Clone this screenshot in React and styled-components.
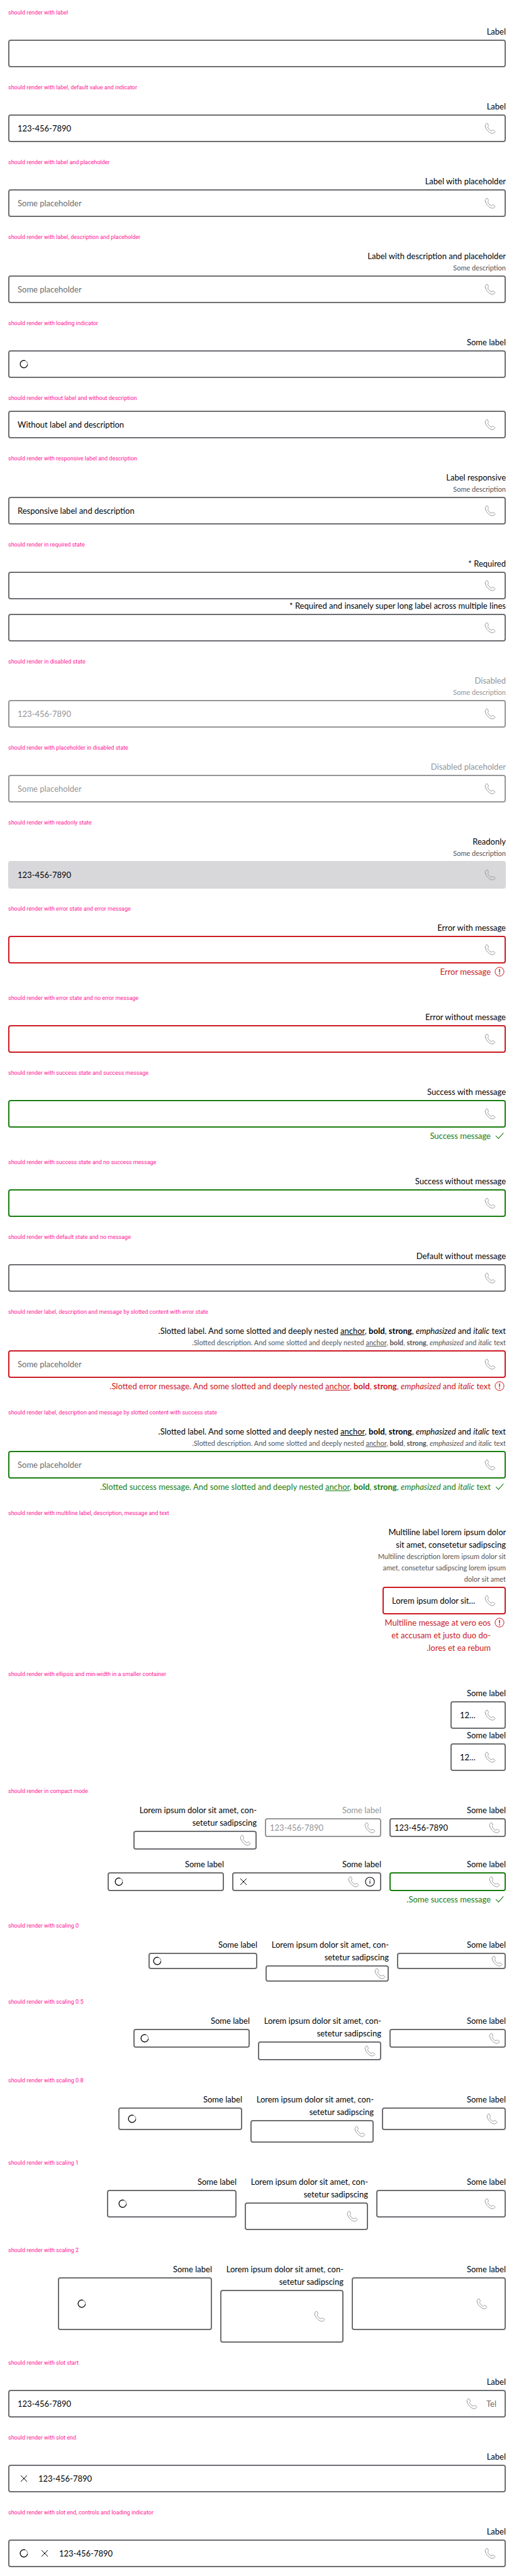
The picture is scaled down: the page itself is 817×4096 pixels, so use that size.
import React, { useId } from 'react';
import styled, { createGlobalStyle, css } from 'styled-components';

const GlobalStyle = createGlobalStyle`
  *, *::before, *::after { box-sizing: border-box; }
  body {
    margin: 0;
    background: #fff;
    color: #010205;
    font: 400 13px/20px Lato, "Liberation Sans", sans-serif;
  }
`;

const tones = {
  default: '#6b6d70',
  disabled: '#949598',
  error: '#cc1922',
  success: '#197e10',
  readonly: '#d8d8db',
};

/* Box padding and gap for each step of the scaling setting */
const scales = {
  0: css`padding: 1px 2px; gap: 2px;`,
  0.5: css`padding: 3px 6px; gap: 6px;`,
  0.8: css`padding: 6px 10px; gap: 10px;`,
  1: css`padding: 10px 13px; gap: 13px;`,
  2: css`padding: 30px 26px; gap: 26px;`,
};

const widths = { min: '88px', multiline: '196px' };

const Page = styled.main`
  display: flex;
  flex-direction: column;
  justify-content: space-between;
  gap: 20px;
  min-height: 100vh;
  padding: 12px 13px 14px;
`;

const Section = styled.section`
  display: flex;
  flex-direction: column;
`;

const Heading = styled.h2`
  margin: 0 0 12px;
  color: #ff1493;
  font: 400 9px/16px Roboto, "Liberation Sans", sans-serif;
`;

const Rows = styled.div`
  display: flex;
  flex-direction: column;
  gap: 13px;
`;

const Row = styled.div`
  display: flex;
  align-items: flex-start;
  gap: 13px;
`;

const FieldRoot = styled.div`
  display: flex;
  flex-direction: column;
  flex: none;
  width: ${(p) => widths[p.$size] || 'auto'};
`;

const Label = styled.label`
  color: ${(p) => (p.$disabled ? tones.disabled : '#010205')};
`;

const Description = styled.span`
  color: ${(p) => (p.$disabled ? tones.disabled : '#535457')};
  font-size: 11px;
  line-height: 18px;
  white-space: nowrap;
`;

const Box = styled.div`
  display: flex;
  align-items: center;
  border: 2px solid ${(p) => tones[p.$tone]};
  border-radius: 4px;
  background: ${(p) => (p.$tone === 'readonly' ? tones.readonly : '#fff')};
  ${(p) => scales[p.$scale]}

  ${Label} + &, ${Description} + & { margin-top: 3px; }
`;

const Input = styled.input`
  flex: 1 1 143px;
  width: 143px;
  min-width: 0;
  height: 20px;
  margin: 0;
  padding: 0;
  border: 0;
  background: transparent;
  color: #010205;
  font: inherit;
  text-align: left;
  text-overflow: ellipsis;
  outline: none;

  &::placeholder { color: ${tones.default}; opacity: 1; }
  &:disabled, &:disabled::placeholder { color: ${tones.disabled}; }
`;

const Icon = styled.svg`
  flex: none;
  width: 20px;
  height: 20px;
  fill: none;
  stroke: currentColor;
  stroke-linejoin: round;
`;

const PhoneMark = styled(Icon)`
  color: ${tones.disabled};
`;

const IconButton = styled.button`
  display: flex;
  flex: none;
  padding: 0;
  border: 0;
  background: none;
  color: #010205;
`;

const SlotText = styled.span`
  color: #6b6d70;
`;

const Message = styled.div`
  display: flex;
  align-items: flex-start;
  gap: 4px;
  margin-top: 3px;
  color: ${(p) => tones[p.$tone]};
`;

const Anchor = styled.a`
  color: inherit;
  text-decoration: underline;
`;

const Phone = () => (
  <PhoneMark viewBox="0 0 24 24" strokeWidth="1.2" aria-hidden="true">
    <path d="M5.9 2.6C4.4 3.1 2.5 4.9 2.6 7.1c.2 3.2 2.5 7.2 5.4 10.1 2.9 2.9 6.2 4.7 8.9 4.5 2-.2 3.7-1.6 4.5-3 .2-.4 0-.8-.3-1-1.1-.9-2.2-1.9-3.6-2.5-.5-.2-.9 0-1.2.4-.5.8-1.2 1.3-2 1.1-2.5-.7-5.7-4-6.6-6.5-.3-.9.2-1.6.9-2.1.4-.3.5-.7.3-1.2C8.4 5.5 7.7 4 6.9 3c-.3-.4-.6-.5-1-.4Z" />
  </PhoneMark>
);

const Loader = () => (
  <Icon viewBox="0 0 24 24" strokeWidth="1.4" role="img" aria-label="Loading">
    <circle cx="12" cy="12" r="7" stroke="#949598" />
    <path d="M18.9 13A7 7 0 1 1 14.4 5.4" />
  </Icon>
);

const Clear = () => (
  <IconButton type="button" aria-label="Clear">
    <Icon viewBox="0 0 24 24" strokeWidth="1.2"><path d="M6 6l12 12M18 6 6 18" /></Icon>
  </IconButton>
);

const Info = () => (
  <IconButton type="button" aria-label="Information">
    <Icon viewBox="0 0 24 24" strokeWidth="1.3">
      <circle cx="12" cy="12" r="8.5" />
      <path d="M12 10.5v5.5M12 7.8v1.4" />
    </Icon>
  </IconButton>
);

const ErrorMark = () => (
  <Icon viewBox="0 0 24 24" strokeWidth="1.2" aria-hidden="true">
    <circle cx="12" cy="12" r="8.5" />
    <path d="M12 7v6.5M12 15v2" strokeWidth="1.8" />
  </Icon>
);

const SuccessMark = () => (
  <Icon viewBox="0 0 24 24" strokeWidth="1.3" aria-hidden="true">
    <path d="M5 12.2l5 5L19.5 6.5" />
  </Icon>
);

function Field({
  label, description, message, tone = 'default', scale = 1, size,
  phone, required, start, end, ...input
}) {
  const id = useId();
  const disabled = tone === 'disabled';
  return (
    <FieldRoot dir="rtl" $size={size}>
      {label && <Label htmlFor={id} $disabled={disabled}>{label}{required && ' *'}</Label>}
      {description && <Description id={`${id}-d`} $disabled={disabled}>{description}</Description>}
      <Box $tone={tone} $scale={scale}>
        {start}
        {phone && <Phone />}
        <Input
          id={id}
          type="tel"
          dir="ltr"
          disabled={disabled}
          readOnly={tone === 'readonly'}
          required={required}
          aria-label={label ? undefined : 'Phone'}
          aria-describedby={description ? `${id}-d` : undefined}
          {...input}
        />
        {end}
      </Box>
      {message && (
        <Message $tone={tone}>
          {tone === 'error' ? <ErrorMark /> : <SuccessMark />}
          <span>{message}</span>
        </Message>
      )}
    </FieldRoot>
  );
}

const Example = ({ title, children }) => (
  <Section>
    <Heading>{title}</Heading>
    {children}
  </Section>
);

/* The full stop is a run of its own: right-to-left order puts it at the far left */
const Slotted = ({ name }) => (
  <span>
    Slotted {name}. And some slotted and deeply nested <Anchor href="#">anchor</Anchor>, <b>bold</b>,{' '}
    <strong>strong</strong>, <em>emphasized</em> and <i>italic</i> text<span>.</span>
  </span>
);

const number = '123-456-7890';
const longLabel = 'Lorem ipsum dolor sit amet, con\u00adsetetur sadipscing';

export default function App() {
  return (
    <>
      <GlobalStyle />
      <Page>
        <Example title="should render with label"><Field label="Label" /></Example>
        <Example title="should render with label, default value and indicator">
          <Field label="Label" defaultValue={number} phone />
        </Example>
        <Example title="should render with label and placeholder">
          <Field label="Label with placeholder" placeholder="Some placeholder" phone />
        </Example>
        <Example title="should render with label, description and placeholder">
          <Field label="Label with description and placeholder" description="Some description" placeholder="Some placeholder" phone />
        </Example>
        <Example title="should render with loading indicator"><Field label="Some label" end={<Loader />} /></Example>
        <Example title="should render without label and without description">
          <Field defaultValue="Without label and description" phone />
        </Example>
        <Example title="should render with responsive label and description">
          <Field label="Label responsive" description="Some description" defaultValue="Responsive label and description" phone />
        </Example>
        <Example title="should render in required state">
          <Field label="Required" required phone />
          <Field label="Required and insanely super long label across multiple lines" required phone />
        </Example>
        <Example title="should render in disabled state">
          <Field label="Disabled" description="Some description" tone="disabled" defaultValue={number} phone />
        </Example>
        <Example title="should render with placeholder in disabled state">
          <Field label="Disabled placeholder" tone="disabled" placeholder="Some placeholder" phone />
        </Example>
        <Example title="should render with readonly state">
          <Field label="Readonly" description="Some description" tone="readonly" defaultValue={number} phone />
        </Example>
        <Example title="should render with error state and error message">
          <Field label="Error with message" tone="error" message="Error message" phone />
        </Example>
        <Example title="should render with error state and no error message">
          <Field label="Error without message" tone="error" phone />
        </Example>
        <Example title="should render with success state and success message">
          <Field label="Success with message" tone="success" message="Success message" phone />
        </Example>
        <Example title="should render with success state and no success message">
          <Field label="Success without message" tone="success" phone />
        </Example>
        <Example title="should render with default state and no message">
          <Field label="Default without message" phone />
        </Example>
        <Example title="should render label, description and message by slotted content with error state">
          <Field
            label={<Slotted name="label" />}
            description={<Slotted name="description" />}
            message={<Slotted name="error message" />}
            tone="error"
            placeholder="Some placeholder"
            phone
          />
        </Example>
        <Example title="should render label, description and message by slotted content with success state">
          <Field
            label={<Slotted name="label" />}
            description={<Slotted name="description" />}
            message={<Slotted name="success message" />}
            tone="success"
            placeholder="Some placeholder"
            phone
          />
        </Example>
        <Example title="should render with multiline label, description, message and text">
          <Row dir="rtl">
            <Field
              size="multiline"
              label="Multiline label lorem ipsum dolor sit amet, consetetur sadipscing"
              description={(
                <>
                  Multiline description lorem ipsum dolor sit<br />
                  amet, consetetur sadipscing lorem ipsum<br />
                  dolor sit amet
                </>
              )}
              message={'Multiline message at vero eos et accusam et justo duo do\u00adlores et ea rebum.'}
              tone="error"
              defaultValue="Lorem ipsum dolor sit amet, consetetur sadipscing"
              phone
            />
          </Row>
        </Example>
        <Example title="should render with ellipsis and min-width in a smaller container">
          <Row dir="rtl"><Field size="min" label="Some label" defaultValue={number} phone /></Row>
          <Row dir="rtl"><Field size="min" label="Some label" defaultValue={number} phone /></Row>
        </Example>
        <Example title="should render in compact mode">
          <Rows>
            <Row dir="rtl">
              <Field scale={0.5} label="Some label" defaultValue={number} phone />
              <Field scale={0.5} label="Some label" tone="disabled" defaultValue={number} phone />
              <Field scale={0.5} size="multiline" label={longLabel} phone />
            </Row>
            <Row dir="rtl">
              <Field scale={0.5} label="Some label" tone="success" message="Some success message." phone />
              <Field scale={0.5} label="Some label" start={<Info />} end={<Clear />} phone />
              <Field scale={0.5} label="Some label" end={<Loader />} />
            </Row>
          </Rows>
        </Example>
        {[0, 0.5, 0.8, 1, 2].map((scale) => (
          <Example key={scale} title={`should render with scaling ${scale}`}>
            <Row dir="rtl">
              <Field scale={scale} label="Some label" phone />
              <Field scale={scale} size="multiline" label={longLabel} phone />
              <Field scale={scale} label="Some label" end={<Loader />} />
            </Row>
          </Example>
        ))}
        <Example title="should render with slot start">
          <Field label="Label" defaultValue={number} start={<SlotText>Tel</SlotText>} phone />
        </Example>
        <Example title="should render with slot end">
          <Field label="Label" defaultValue={number} end={<Clear />} />
        </Example>
        <Example title="should render with slot end, controls and loading indicator">
          <Field label="Label" defaultValue={number} end={<><Clear /><Loader /></>} phone />
        </Example>
      </Page>
    </>
  );
}
